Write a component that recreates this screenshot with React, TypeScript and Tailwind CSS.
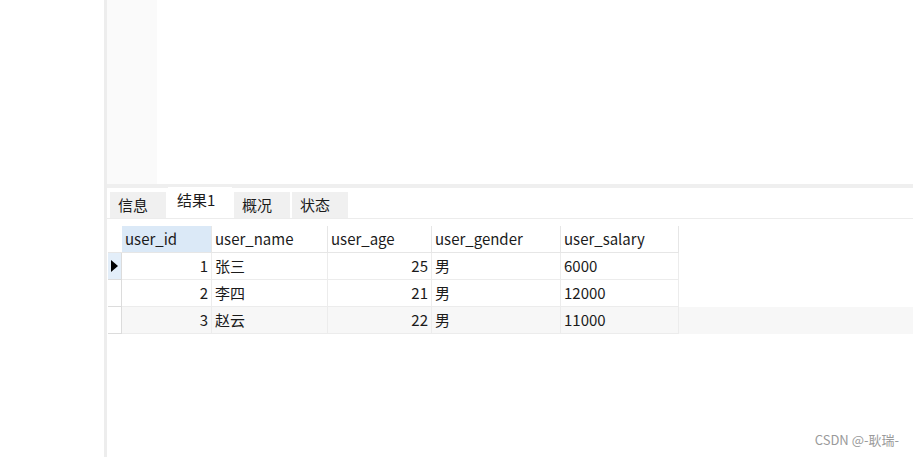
const cols = [
  { key: 'id', label: 'user_id', w: 'w-[90px]', right: true },
  { key: 'name', label: 'user_name', w: 'w-[116px]', right: false },
  { key: 'age', label: 'user_age', w: 'w-[104px]', right: true },
  { key: 'gender', label: 'user_gender', w: 'w-[129px]', right: false },
  { key: 'salary', label: 'user_salary', w: 'w-[118px]', right: false },
];

const rows = [
  { id: '1', name: '张三', age: '25', gender: '男', salary: '6000' },
  { id: '2', name: '李四', age: '21', gender: '男', salary: '12000' },
  { id: '3', name: '赵云', age: '22', gender: '男', salary: '11000' },
];

const tabs = ['信息', '结果1', '概况', '状态'];

export default function App() {
  return (
    <div
      className="w-[913px] h-[457px] flex bg-white text-[#1b1b1b] overflow-hidden relative"
      style={{ fontFamily: '"Noto Sans CJK SC", "Noto Sans", sans-serif' }}
    >
      <div className="w-[104px] shrink-0" />
      <div className="w-[3px] shrink-0 bg-[#ededed]" />
      <div className="flex-1 flex flex-col">
        {/* editor area */}
        <div className="h-[184px] flex">
          <div className="w-[50px] bg-[#fafafa]" />
          <div className="flex-1" />
        </div>
        <div className="h-[4px] bg-[#efefef]" />
        {/* tabs */}
        <div className="h-[31px] flex items-end gap-[2px] pl-[3px] border-b border-[#ececec]">
          {tabs.map((t, i) =>
            i === 1 ? (
              <div key={t} className="h-[31px] w-[64px] bg-white flex items-start pt-[2px] pl-[9px] text-[15px]">
                {t}
              </div>
            ) : (
              <div key={t} className="h-[26px] w-[56px] bg-[#f0f0f0] flex items-center pl-[8px] text-[15px]">
                {t}
              </div>
            )
          )}
        </div>
        {/* grid */}
        <div className="pt-[7px] pl-[1px]">
          <div className="flex h-[27px]">
            <div className="w-[14px] border-b border-[#e6e6e6]" />
            {cols.map((c, i) => (
              <div
                key={c.key}
                className={`${c.w} h-[27px] flex items-center pl-[3px] text-[15px] border-r border-b border-[#e6e6e6] ${i === 0 ? 'bg-[#dbe9f7]' : 'bg-white'}`}
              >
                {c.label}
              </div>
            ))}
          </div>
          {rows.map((r, ri) => (
            <div key={r.id} className={`flex h-[27px] ${ri === 2 ? 'bg-[#f7f7f7]' : 'bg-white'}`}>
              <div
                className={`w-[14px] flex items-center justify-center border-r border-b border-[#dcdcdc] ${ri === 0 ? 'bg-[#e3eef9]' : 'bg-white'}`}
              >
                {ri === 0 && (
                  <svg width="7" height="12" viewBox="0 0 7 12">
                    <path d="M0 0 L7 6 L0 12 Z" fill="#000" />
                  </svg>
                )}
              </div>
              {cols.map((c) => (
                <div
                  key={c.key}
                  className={`${c.w} h-[27px] flex items-center text-[15px] border-r border-b border-[#ececec] ${c.right ? 'justify-end pr-[3px]' : 'pl-[3px]'}`}
                >
                  {r[c.key as keyof typeof r]}
                </div>
              ))}
            </div>
          ))}
        </div>
      </div>
      <div className="absolute right-[14px] bottom-[8px] text-[13px] text-[#9a9a9a]">CSDN @-耿瑞-</div>
    </div>
  );
}
